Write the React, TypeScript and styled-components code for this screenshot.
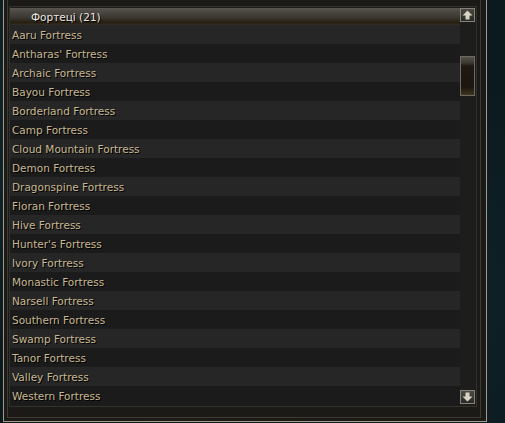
import React from "react";
import styled, { createGlobalStyle } from "styled-components";

const Global = createGlobalStyle`
  html, body { margin: 0; padding: 0; }
  body {
    width: 505px;
    height: 423px;
    overflow: hidden;
    background-color: #0b1a1f;
    background-image:
      radial-gradient(ellipse at 20% 30%, rgba(30,60,70,0.35), transparent 60%),
      radial-gradient(ellipse at 80% 70%, rgba(20,45,55,0.35), transparent 55%);
    font-family: "DejaVu Sans", "Liberation Sans", sans-serif;
  }
`;

const Frame = styled.div`
  box-sizing: border-box;
  margin-left: 3px;
  width: 484px;
  height: 422px;
  background: #1c1a17;
  border: 1px solid #a39b89;
  border-top: none;
  padding: 0 5px 3px 3px;
  display: flex;
`;

const MidFrame = styled.div`
  box-sizing: border-box;
  flex: 1;
  border: 1px solid #3f3b34;
  border-top: none;
  padding: 6px 3px 10px 1px;
  display: flex;
`;

const ListBox = styled.div`
  box-sizing: border-box;
  flex: 1;
  border: 1px solid #35312b;
  padding: 1px 1px 0 0;
  display: flex;
  background: #1b1b1b;
`;

const ListArea = styled.div`
  flex: 1;
  display: flex;
  flex-direction: column;
`;

const Header = styled.div`
  box-sizing: border-box;
  height: 17px;
  padding: 1px 0 0 21px;
  display: flex;
  align-items: center;
  color: #ece8e0;
  font-size: 10.5px;
  text-shadow: 1px 1px 0 #000;
  background: linear-gradient(
    to bottom,
    #5a5650 0px,
    #4a4640 4px,
    #3a3630 10px,
    #2c2519 13px,
    #241d12 15px,
    #3a2d1b 16px,
    #2e2a24 17px
  );
`;

const Row = styled.div<{ $alt: boolean }>`
  box-sizing: border-box;
  height: 19px;
  padding: 1px 0 0 2px;
  line-height: 18px;
  font-size: 10.5px;
  color: #c9b891;
  text-shadow: 1px 1px 0 #000;
  background: ${(p) => (p.$alt ? "#262626" : "#1b1b1b")};
  white-space: nowrap;
`;

const ScrollCol = styled.div`
  width: 15px;
  display: flex;
  flex-direction: column;
  background: #1d1d1c;
`;

const ArrowButton = styled.div`
  box-sizing: border-box;
  width: 15px;
  height: 14px;
  border: 1px solid #858278;
  background: linear-gradient(to bottom, #4a4944, #2a2925);
  display: flex;
  align-items: center;
  justify-content: center;
`;

const Track = styled.div`
  flex: 1;
  display: flex;
  flex-direction: column;
`;

const Thumb = styled.div`
  box-sizing: border-box;
  width: 15px;
  height: 40px;
  margin-top: 34px;
  border: 1px solid #6d6a62;
  background: linear-gradient(
    to bottom,
    #55524b 0px,
    #3a3732 6px,
    #1f1913 9px,
    #1c1610 30px,
    #3a301c 37px,
    #5a4c2c 40px
  );
`;

const BottomGap = styled.div`
  height: 2px;
`;

const items = [
  "Aaru Fortress",
  "Antharas' Fortress",
  "Archaic Fortress",
  "Bayou Fortress",
  "Borderland Fortress",
  "Camp Fortress",
  "Cloud Mountain Fortress",
  "Demon Fortress",
  "Dragonspine Fortress",
  "Floran Fortress",
  "Hive Fortress",
  "Hunter's Fortress",
  "Ivory Fortress",
  "Monastic Fortress",
  "Narsell Fortress",
  "Southern Fortress",
  "Swamp Fortress",
  "Tanor Fortress",
  "Valley Fortress",
  "Western Fortress",
];

const Arrow = ({ down }: { down?: boolean }) => (
  <svg width="11" height="10" viewBox="0 0 11 10" style={down ? { transform: "rotate(180deg)" } : undefined}>
    <path d="M5.5 0.5 L10.5 5.5 L7.5 5.5 L7.5 9.5 L3.5 9.5 L3.5 5.5 L0.5 5.5 Z" fill="#d9d4c6" />
  </svg>
);

export default function App() {
  return (
    <>
      <Global />
      <Frame>
        <MidFrame>
          <ListBox>
            <ListArea>
              <Header>Фортеці (21)</Header>
              {items.map((t, i) => (
                <Row key={t} $alt={i % 2 === 0}>
                  {t}
                </Row>
              ))}
            </ListArea>
            <ScrollCol>
              <ArrowButton>
                <Arrow />
              </ArrowButton>
              <Track>
                <Thumb />
              </Track>
              <ArrowButton>
                <Arrow down />
              </ArrowButton>
              <BottomGap />
            </ScrollCol>
          </ListBox>
        </MidFrame>
      </Frame>
    </>
  );
}
